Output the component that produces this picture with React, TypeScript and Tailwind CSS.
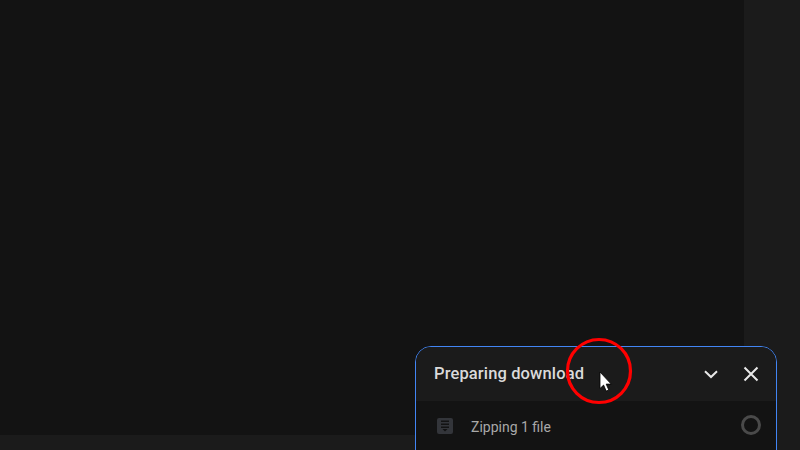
export default function App() {
  return (
    <div className="relative w-[800px] h-[450px] overflow-hidden bg-[#1b1b1b] font-['Roboto','Liberation_Sans',sans-serif]">
      <div className="w-[744px] h-[435px] bg-[#131313]" />
      <div className="absolute left-[415px] top-[346px] w-[362px] h-[120px] rounded-t-[16px] border border-[#4285f4] bg-[#131313] overflow-hidden">
        <div className="h-[54px] bg-[#1b1b1b] flex items-center pl-[18px] pr-[17px]">
          <span className="flex-1 text-[16.5px] font-medium text-[#dadada] tracking-[0.13px]">Preparing download</span>
          <svg width="14" height="9" viewBox="0 0 14 9" className="mr-[25px]" fill="none" stroke="#e8e8e8" strokeWidth="2">
            <path d="M1 1.2 7 7l6-5.8" />
          </svg>
          <svg width="16" height="16" viewBox="0 0 16 16" fill="none" stroke="#e8e8e8" strokeWidth="2">
            <path d="M1.5 1.5l13 13M14.5 1.5l-13 13" />
          </svg>
        </div>
        <div className="h-[50px] flex items-center pl-[21px] pr-[15px]">
          <svg width="16" height="16" viewBox="0 0 16 16" className="mr-[18px]">
            <rect width="16" height="16" rx="2" fill="#33353a" />
            <path d="M4 2.5h8v1.6H4zM4 5.5h8v1.6H4zM4 8.5h8v1.6H4zM5.5 11h5L8 13.5z" fill="#131313" />
          </svg>
          <span className="flex-1 pt-[2px] text-[14px] text-[#a9a9a9]">Zipping 1 file</span>
          <div className="w-[20px] h-[20px] mb-[2px] rounded-full border-[3px] border-[#4a4a4a]" />
        </div>
      </div>
      <svg width="70" height="70" viewBox="0 0 70 70" className="absolute left-[564px] top-[336px]">
        <circle cx="35" cy="35" r="31.5" fill="none" stroke="#ff0000" strokeWidth="3.2" />
        <path d="M36 36v16.5l3.6-3.4 2.6 6 2.6-1.1-2.6-5.9h5z" fill="#fff" stroke="#000" strokeWidth="0.8" />
      </svg>
    </div>
  );
}
